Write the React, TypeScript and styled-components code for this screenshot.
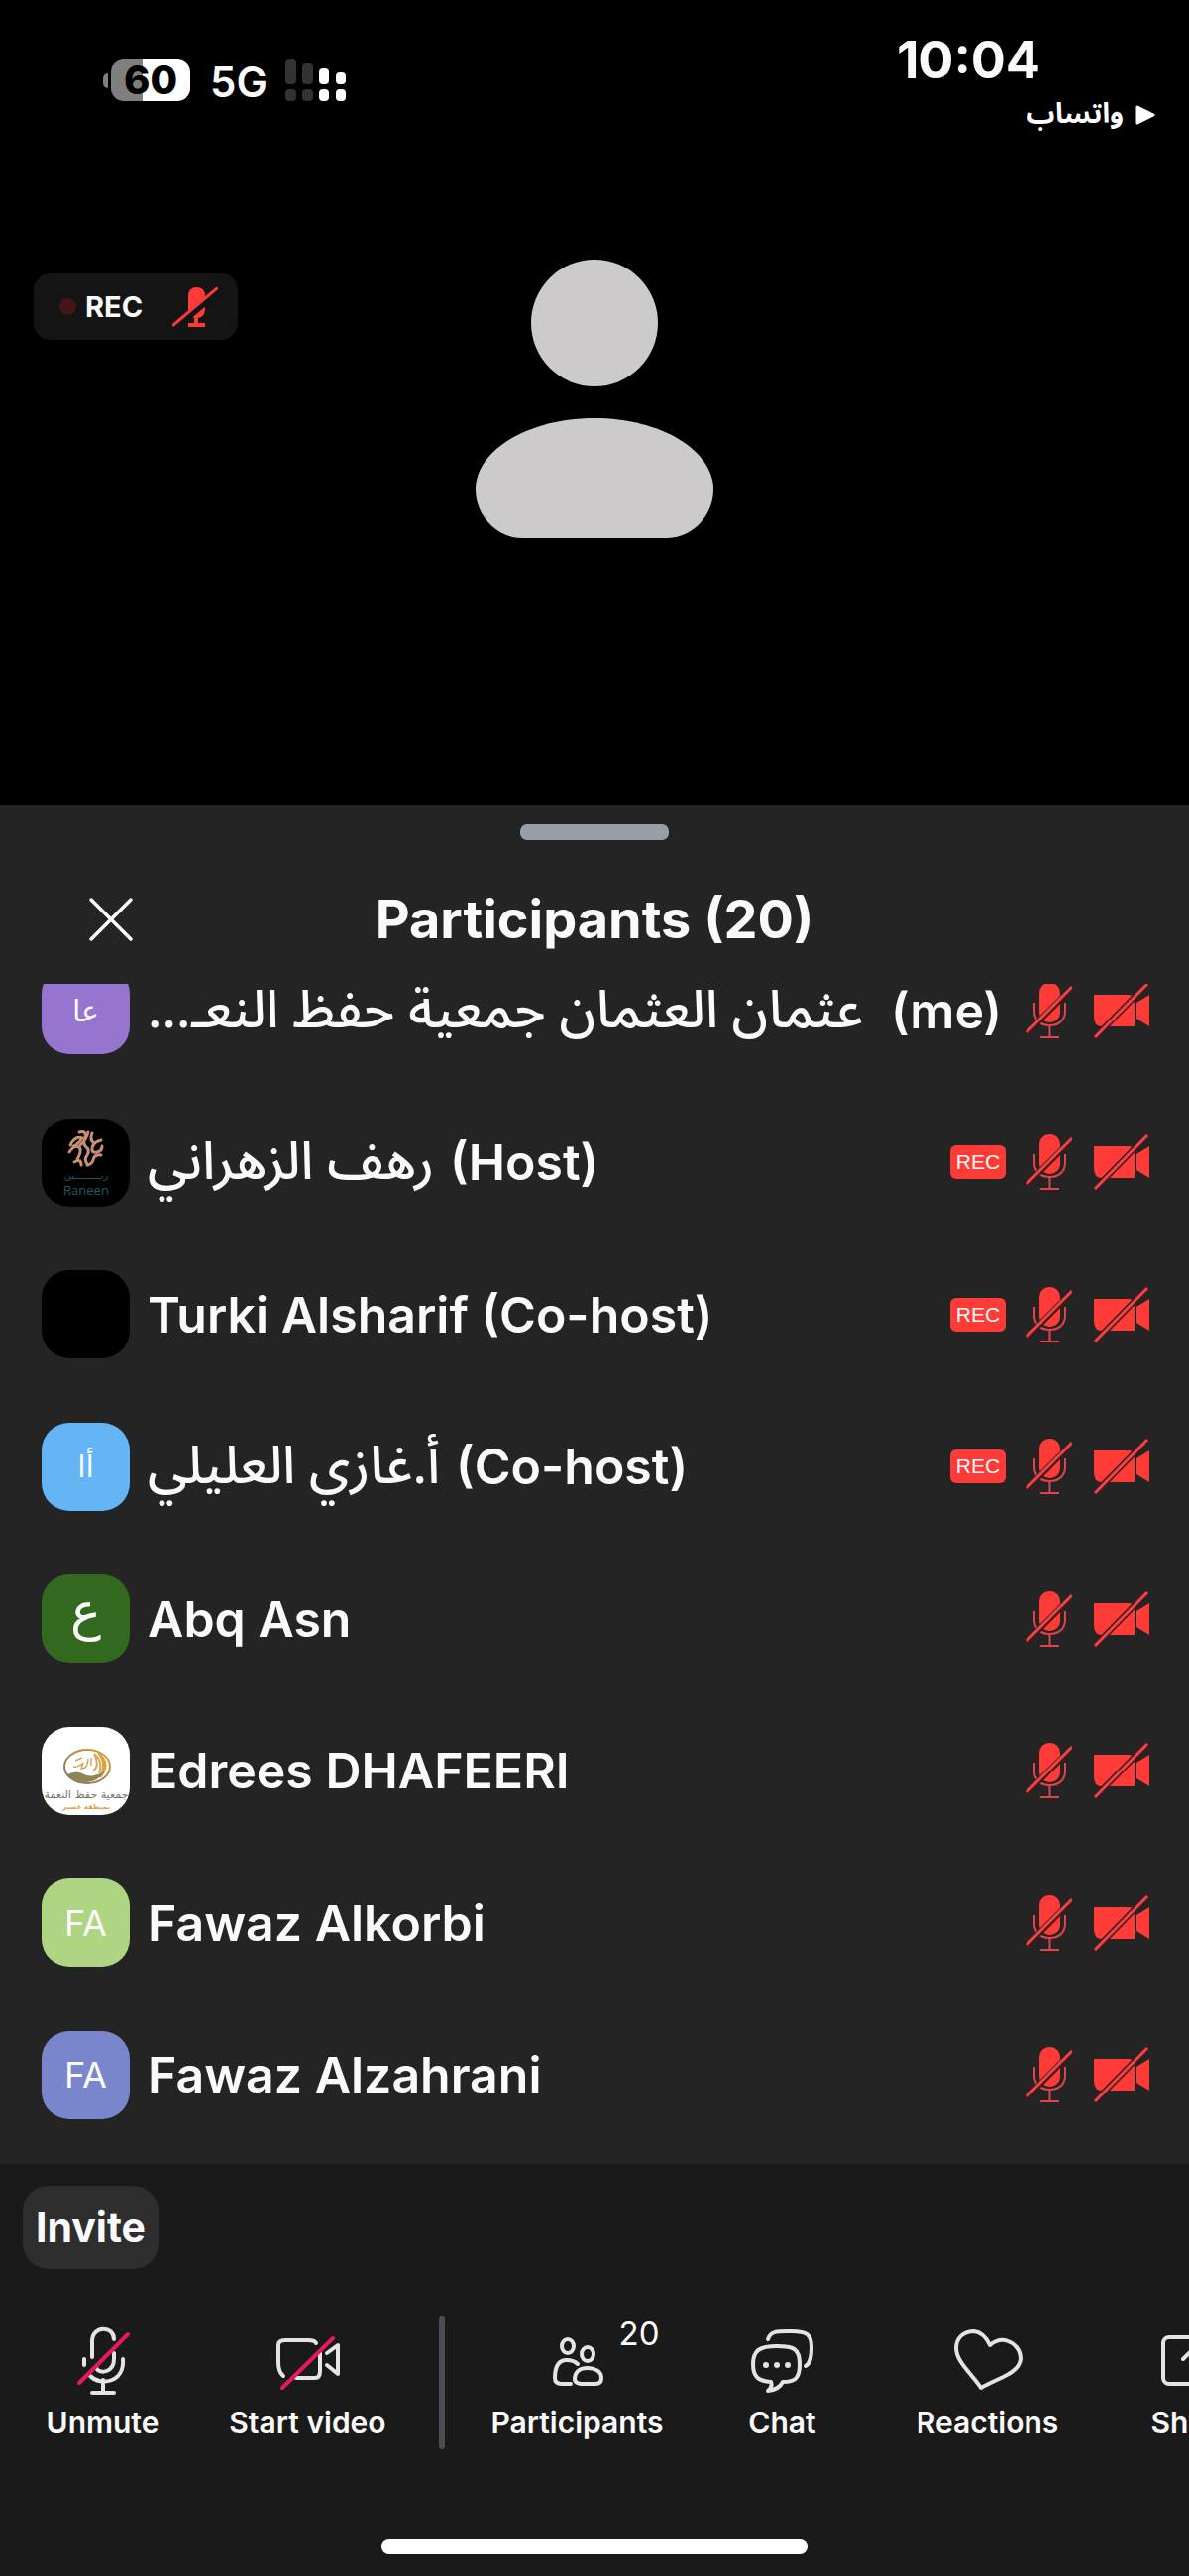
import React from "react";
import styled, { createGlobalStyle } from "styled-components";

const latin = `Inter, "DejaVu Sans", sans-serif`;
const arabic = `"Noto Sans Arabic", "DejaVu Sans", Inter, sans-serif`;
const alert = "#ff3b38";

const GlobalStyle = createGlobalStyle`
  * { box-sizing: border-box; }
  html, body, #root { height: 100%; }
  body {
    margin: 0;
    background: #1a1a1a;
    color: #fafafa;
    font-family: ${latin};
  }
  button {
    margin: 0;
    padding: 0;
    border: 0;
    background: none;
    color: inherit;
    font: inherit;
    cursor: pointer;
  }
  svg { display: block; flex: none; }
`;

const Screen = styled.div`
  display: flex;
  flex-direction: column;
  min-height: 100%;
  overflow: hidden;
`;

/* ---------- meeting stage ---------- */

const Stage = styled.section`
  background: #000;
  min-height: 812px;
  display: flex;
  flex-direction: column;
`;

const StatusBar = styled.header`
  display: flex;
  justify-content: space-between;
  height: 262px;
`;

const StatusGroup = styled.div`
  display: flex;
  align-items: center;
  height: 44px;
  margin: 59px 0 0 104px;
`;

const BatteryNub = styled.span`
  width: 5px;
  height: 15px;
  margin-right: 3px;
  border-radius: 5px 0 0 5px;
  background: #7f7f7f;
`;

const Battery = styled.span`
  display: grid;
  place-items: center;
  width: 80px;
  height: 42px;
  border-radius: 13px;
  background: linear-gradient(to right, #7f7f7f 40%, #fff 40%);
  color: #000;
  font-size: 40px;
  line-height: 42px;
  font-weight: 800;
`;

const Network = styled.span`
  margin: 0 18px 0 20px;
  padding-top: 4px;
  font-size: 42px;
  line-height: 44px;
  font-weight: 600;
`;

const ClockGroup = styled.div`
  display: flex;
  flex-direction: column;
  align-items: flex-end;
  margin: 36px 34px 0 0;
`;

const Clock = styled.time`
  padding-right: 116px;
  font-size: 52px;
  line-height: 50px;
  font-weight: 700;
`;

const BackLink = styled.a`
  display: flex;
  align-items: center;
  gap: 12px;
  margin-top: 8px;
  color: #fff;
  text-decoration: none;
  font-family: ${arabic};
  font-size: 28px;
  line-height: 44px;
  font-weight: 700;
`;

const Tile = styled.div`
  display: grid;
  grid-template-columns: 1fr auto 1fr;
  align-items: start;
`;

const RecordingPill = styled.div`
  justify-self: start;
  display: flex;
  align-items: center;
  width: 206px;
  height: 67px;
  margin: 14px 0 0 34px;
  padding: 0 20px 0 26px;
  border-radius: 17px;
  background: #141414;
  font-size: 29px;
  line-height: 34px;
  font-weight: 700;
`;

const RecordingDot = styled.span`
  width: 17px;
  height: 17px;
  margin-right: 9px;
  border-radius: 50%;
  background: #46151a;
`;

const PillMic = styled.span`
  margin-left: auto;
`;

/* ---------- participants sheet ---------- */

const Sheet = styled.section`
  flex: 1;
  display: flex;
  flex-direction: column;
  background: #242424;
`;

const Handle = styled.div`
  width: 150px;
  height: 16px;
  margin: 20px auto 0;
  border-radius: 7px;
  background: #97a0a9;
`;

const SheetHeader = styled.header`
  display: grid;
  grid-template-columns: 1fr auto 1fr;
  align-items: center;
  height: 145px;
  padding-top: 14px;
`;

const CloseButton = styled.button`
  justify-self: start;
  margin-left: 88px;
`;

const SheetTitle = styled.h1`
  margin: 0;
  font-size: 54px;
  line-height: 60px;
  font-weight: 700;
`;

const Scroller = styled.div`
  flex: 1;
  display: flex;
  flex-direction: column;
  overflow: hidden;
  padding-bottom: 13px;
`;

const List = styled.ul`
  flex: 1;
  display: flex;
  flex-direction: column;
  margin: -50px 0 0;
  padding: 0;
  list-style: none;
`;

const Row = styled.li`
  flex: 1 0 153px;
  display: flex;
  align-items: center;
  padding: 0 40px 0 42px;
`;

const Avatar = styled.span<{ $color: string; $size?: number; $raised?: boolean }>`
  flex: none;
  display: grid;
  place-items: center;
  width: 89px;
  height: 89px;
  margin-right: 18px;
  padding-bottom: ${(p) => (p.$raised ? 16 : 0)}px;
  border-radius: 28px;
  overflow: hidden;
  background: ${(p) => p.$color};
  font-family: ${latin};
  font-size: ${(p) => p.$size ?? 36}px;
  line-height: 60px;
`;

const Name = styled.span`
  flex: 1;
  min-width: 0;
  display: flex;
  align-items: center;
  gap: 16px;
  font-size: 50px;
  line-height: 52px;
  font-weight: 600;
  white-space: nowrap;
`;

const ArabicName = styled.bdi`
  font-family: ${arabic};
  font-size: 53px;
  line-height: 52px;
  font-weight: 500;
`;

const SelfTag = styled.span`
  margin-left: auto;
  padding-right: 24px;
`;

const RecBadge = styled.span`
  width: 56px;
  margin-right: 20px;
  border-radius: 6px;
  background: ${alert};
  font-family: "Liberation Sans", Arial, sans-serif;
  font-size: 21px;
  line-height: 34px;
  text-align: center;
`;

const Status = styled.span`
  display: flex;
  align-items: center;
  gap: 22px;
`;

/* ---------- dock ---------- */

const Dock = styled.footer`
  background: #1a1a1a;
  min-height: 416px;
  display: flex;
  flex-direction: column;
`;

const InviteButton = styled.button`
  align-self: flex-start;
  width: 137px;
  height: 84px;
  margin: 22px 0 0 23px;
  border-radius: 26px;
  background: #2e2e2e;
  font-size: 41px;
  font-weight: 700;
`;

const Toolbar = styled.nav`
  display: flex;
  align-items: center;
  margin-top: 48px;
  overflow: hidden;
`;

const Tool = styled.button`
  flex: none;
  display: flex;
  flex-direction: column;
  align-items: center;
  gap: 7px;
  width: 207px;
  padding-bottom: 7px;
  font-size: 30px;
  line-height: 34px;
  font-weight: 600;
`;

const ToolIcon = styled.span`
  position: relative;
  display: grid;
  place-items: center;
  width: 80px;
  height: 80px;
`;

const Count = styled.span`
  position: absolute;
  left: 82px;
  top: -6px;
  font-size: 33px;
  line-height: 40px;
  font-weight: 400;
`;

const Divider = styled.span`
  flex: none;
  width: 6px;
  height: 134px;
  margin: 0 30px 0 29px;
  border-radius: 3px;
  background: #4a4e54;
`;

const HomeIndicator = styled.div`
  width: 430px;
  height: 15px;
  margin: auto auto 22px;
  border-radius: 8px;
  background: #fff;
`;

/* ---------- drawings ---------- */

const SignalDots = () => (
  <svg width="62" height="42" viewBox="0 0 62 42" aria-hidden="true">
    <g fill="#333">
      <rect x="0" y="0" width="11" height="25" rx="4" />
      <rect x="17" y="4" width="11" height="21" rx="4" />
      <rect x="0" y="30" width="11" height="12" rx="4" />
      <rect x="17" y="30" width="11" height="12" rx="4" />
    </g>
    <g fill="#fff">
      <rect x="34" y="9" width="10" height="16" rx="4" />
      <rect x="51" y="13" width="10" height="12" rx="4" />
      <rect x="34" y="30" width="10" height="12" rx="4" />
      <rect x="51" y="30" width="10" height="12" rx="4" />
    </g>
  </svg>
);

const BackArrow = () => (
  <svg width="20" height="22" viewBox="0 0 20 22" aria-hidden="true">
    <path d="M2 3 L18 11 L2 19 Z" fill="#fff" stroke="#fff" strokeWidth="3" strokeLinejoin="round" />
  </svg>
);

const Person = () => (
  <svg width="240" height="281" viewBox="0 0 240 281" role="img" aria-label="Camera is off">
    <g fill="#cccacb">
      <circle cx="120" cy="64" r="64" />
      <path d="M0 232 C0 192 54 160 120 160 S240 192 240 232 C240 259 218 281 193 281 H47 C22 281 0 259 0 232 Z" />
    </g>
  </svg>
);

const PillMicIcon = () => (
  <svg width="46" height="40" viewBox="0 0 46 40" aria-hidden="true">
    <rect x="16" y="0" width="17" height="31" rx="8" fill={alert} />
    <path d="M24 30 V37 M16 38 H33" stroke={alert} strokeWidth="4" />
    <path d="M3 41 L47 4" stroke="#141414" strokeWidth="6" />
    <path d="M1 38 L45 1" stroke="#f4393b" strokeWidth="3" strokeLinecap="round" />
  </svg>
);

const MutedMic = () => (
  <svg width="47" height="58" viewBox="0 0 47 58" role="img" aria-label="Muted">
    <rect x="14" y="1" width="21" height="40" rx="10" fill={alert} />
    <path
      d="M9 21 V30 C9 39 16 44 24.500 44 S40 39 40 30 V21 M24.500 44 V56 M15 56 H34"
      fill="none"
      stroke="#e2444a"
      strokeWidth="2"
    />
    <path d="M1 52 L47 6" stroke="#4a1718" strokeWidth="6" />
    <path d="M1 51 L47 5" stroke="#e5474b" strokeWidth="3" />
  </svg>
);

const CameraOff = () => (
  <svg width="56" height="58" viewBox="0 0 56 58" role="img" aria-label="Camera off">
    <path d="M0 13 H35 Q41 13 41 19 V45 H8 Q0 45 0 35 Z" fill={alert} />
    <path d="M43 21 L56 13 V45 L43 37 Z" fill={alert} />
    <path d="M0 57 L55 1" stroke="#4a1718" strokeWidth="6" />
    <path d="M1 56 L54 2" stroke="#e5474b" strokeWidth="3" />
  </svg>
);

const CloseIcon = () => (
  <svg width="48" height="48" viewBox="0 0 48 48" aria-hidden="true">
    <path d="M4 4 L44 44 M44 4 L4 44" stroke="#fff" strokeWidth="3.500" strokeLinecap="round" />
  </svg>
);

const RaneenLogo = () => (
  <svg width="89" height="89" viewBox="0 0 89 89" role="img" aria-label="Raneen">
    <g fill="none" stroke="#c98f74" strokeWidth="3" strokeLinecap="round">
      <path d="M29 27 Q34 17 41 20 Q36 27 32 28 M28 34 Q33 26 38 29 Q41 33 36 41" />
      <path d="M39 27 Q45 22 47 14 M38 14 Q46 12 44 20 Q41 25 45 29 Q49 32 46 37 Q42 42 47 47" />
      <path d="M51 15 Q48 22 53 25 M60 22 Q52 24 51 30 Q50 35 56 34 Q61 33 61 28" />
      <path d="M60 37 Q53 36 52 42 Q51 46 46 47 M33 44 Q40 40 40 47" />
    </g>
    <text x="45" y="61" textAnchor="middle" fontFamily="DejaVu Sans, sans-serif" fontSize="10" fill="#1d5a62">
      رنـــــــــين
    </text>
    <text x="45" y="77" textAnchor="middle" fontFamily="Open Sans, sans-serif" fontSize="13" fill="#1d5a62">
      Raneen
    </text>
  </svg>
);

const SocietyLogo = () => (
  <svg width="89" height="89" viewBox="0 0 89 89" role="img" aria-label="جمعية حفظ النعمة">
    <defs>
      <linearGradient id="ring" x1="0" y1="1" x2="1" y2="0">
        <stop offset="0" stopColor="#777466" />
        <stop offset="0.500" stopColor="#a88a4e" />
        <stop offset="1" stopColor="#e0a23c" />
      </linearGradient>
    </defs>
    <ellipse cx="46" cy="40" rx="23" ry="17" fill="none" stroke="url(#ring)" strokeWidth="2" />
    <path d="M57 26 Q71 37 59 51 Q66 36 57 26 Z" fill="#e0a23c" stroke="#e0a23c" strokeWidth="2" />
    <path d="M26 48 Q36 43 43 48 Q50 52 64 45 Q55 57 44 56 Q32 56 26 48 Z" fill="#8f8457" />
    <path d="M52 44 Q59 40 53 27 Q62 34 58 47" fill="none" stroke="#d8ab62" strokeWidth="2" />
    <path d="M34 34 L41 31 M32 40 Q37 41 42 36 L40 42 Q46 43 47 32 M50 31 V39" fill="none" stroke="#d3a858" strokeWidth="1.500" />
    <text x="45" y="72" textAnchor="middle" fontFamily="DejaVu Sans, sans-serif" fontSize="11" fill="#77746f">
      جمعية حفظ النعمة
    </text>
    <text x="45" y="83" textAnchor="middle" fontFamily="DejaVu Sans, sans-serif" fontSize="7" fontWeight="700" fill="#d8a24a">
      بمنطقة عسير
    </text>
  </svg>
);

const Line = styled.svg`
  fill: none;
  stroke: #e3e3e8;
  stroke-width: 4;
  stroke-linecap: round;
  stroke-linejoin: round;
`;

const UnmuteIcon = () => (
  <Line width="80" height="80" viewBox="0 0 80 80" aria-hidden="true">
    <path d="M29 38 V22 C29 6 51 6 51 20 M51 34 V40 C51 53 37 56 33 49" />
    <path d="M21 40 V46 M60 40 C62 63 38 68 27 57 M40 61 V74 M29 74 H51" />
    <path d="M16 64 L65 15" stroke="#e5195c" />
  </Line>
);

const StartVideoIcon = () => (
  <Line width="80" height="80" viewBox="0 0 80 80" aria-hidden="true">
    <path d="M15 57 Q10 53 10 43 V26 Q10 21 17 21 H40 Q47 21 48 24 M52 34 V52 Q52 59 47 59 H28" />
    <path d="M59 34 L70 26 V55 L59 46" />
    <path d="M14 69 L65 19" stroke="#e5195c" />
  </Line>
);

const ParticipantsIcon = () => (
  <Line width="80" height="80" viewBox="0 0 80 80" aria-hidden="true">
    <ellipse cx="30" cy="27" rx="6" ry="7" />
    <ellipse cx="50" cy="35" rx="6" ry="7" />
    <path d="M33 65 H24 Q17 65 17 59 C17 47 21 41 29 41 Q36 41 40 45" />
    <path d="M43 65 Q37 64 37 60 C37 52 43 49 50 49 S64 52 64 59 Q64 65 58 65 Z" />
  </Line>
);

const ChatIcon = () => (
  <Line width="80" height="80" viewBox="0 0 80 80" aria-hidden="true">
    <path d="M25 20 C28 11 36 12 49 12 C64 12 69 15 69 28 C69 38 68 44 63 47" />
    <path d="M34 27 C50 27 57 29 57 45 C57 60 52 63 40 63 Q36 71 25 72 Q30 68 28 63 C15 62 10 58 10 45 C10 31 17 27 34 27 Z" />
    <g fill="#e3e3e8" stroke="none">
      <circle cx="23" cy="46" r="3" />
      <circle cx="34" cy="46" r="3" />
      <circle cx="45" cy="46" r="3" />
    </g>
  </Line>
);

const HeartIcon = () => (
  <Line width="80" height="80" viewBox="0 0 80 80" aria-hidden="true">
    <path d="M33 69 C24 55 8 43 8 29 C8 18 16 12 26 12 Q36 13 42 26 Q49 20 57 21 C67 23 73 31 73 40 C71 55 50 59 33 69 Z" />
  </Line>
);

const ShareIcon = () => (
  <Line width="80" height="80" viewBox="0 0 80 80" aria-hidden="true">
    <rect x="10" y="18" width="60" height="47" rx="6" />
    <path d="M40 53 V30 M30 40 L40 30 L50 40" />
  </Line>
);

/* ---------- data ---------- */

type Participant = {
  id: string;
  name: React.ReactNode;
  avatar: React.ReactNode;
  color: string;
  size?: number;
  raised?: boolean;
  recording?: boolean;
};

const participants: Participant[] = [
  {
    id: "me",
    name: (
      <>
        <ArabicName dir="rtl">عثمان العثمان جمعية حفظ النعـ...</ArabicName>
        <SelfTag>(me)</SelfTag>
      </>
    ),
    avatar: "عا",
    color: "#9575cd",
    size: 30,
  },
  {
    id: "rahaf",
    name: (
      <>
        <ArabicName dir="rtl">رهف الزهراني</ArabicName>
        <span>(Host)</span>
      </>
    ),
    avatar: <RaneenLogo />,
    color: "#000",
    recording: true,
  },
  { id: "turki", name: "Turki Alsharif (Co-host)", avatar: null, color: "#000", recording: true },
  {
    id: "ghazi",
    name: (
      <>
        <ArabicName dir="rtl">أ.غازي العليلي</ArabicName>
        <span>(Co-host)</span>
      </>
    ),
    avatar: "أا",
    color: "#64b5f6",
    size: 30,
    recording: true,
  },
  { id: "abq", name: "Abq Asn", avatar: "ع", color: "#33691e", size: 52, raised: true },
  { id: "edrees", name: "Edrees DHAFEERI", avatar: <SocietyLogo />, color: "#fff" },
  { id: "alkorbi", name: "Fawaz Alkorbi", avatar: "FA", color: "#aed581" },
  { id: "alzahrani", name: "Fawaz Alzahrani", avatar: "FA", color: "#7986cb" },
];

const App = () => (
  <>
    <GlobalStyle />
    <Screen>
      <Stage>
        <StatusBar>
          <StatusGroup>
            <BatteryNub />
            <Battery>60</Battery>
            <Network>5G</Network>
            <SignalDots />
          </StatusGroup>
          <ClockGroup>
            <Clock>10:04</Clock>
            <BackLink href="#whatsapp">
              <bdi>واتساب</bdi>
              <BackArrow />
            </BackLink>
          </ClockGroup>
        </StatusBar>
        <Tile>
          <RecordingPill>
            <RecordingDot />
            REC
            <PillMic>
              <PillMicIcon />
            </PillMic>
          </RecordingPill>
          <Person />
        </Tile>
      </Stage>

      <Sheet>
        <Handle />
        <SheetHeader>
          <CloseButton type="button" aria-label="Close">
            <CloseIcon />
          </CloseButton>
          <SheetTitle>Participants (20)</SheetTitle>
        </SheetHeader>
        <Scroller>
          <List>
            {participants.map((p) => (
              <Row key={p.id}>
                <Avatar $color={p.color} $size={p.size} $raised={p.raised}>
                  {p.avatar}
                </Avatar>
                <Name>{p.name}</Name>
                {p.recording && <RecBadge>REC</RecBadge>}
                <Status>
                  <MutedMic />
                  <CameraOff />
                </Status>
              </Row>
            ))}
          </List>
        </Scroller>
      </Sheet>

      <Dock>
        <InviteButton type="button">Invite</InviteButton>
        <Toolbar>
          <Tool type="button">
            <ToolIcon>
              <UnmuteIcon />
            </ToolIcon>
            Unmute
          </Tool>
          <Tool type="button">
            <ToolIcon>
              <StartVideoIcon />
            </ToolIcon>
            Start video
          </Tool>
          <Divider />
          <Tool type="button">
            <ToolIcon>
              <ParticipantsIcon />
              <Count>20</Count>
            </ToolIcon>
            Participants
          </Tool>
          <Tool type="button">
            <ToolIcon>
              <ChatIcon />
            </ToolIcon>
            Chat
          </Tool>
          <Tool type="button">
            <ToolIcon>
              <HeartIcon />
            </ToolIcon>
            Reactions
          </Tool>
          <Tool type="button">
            <ToolIcon>
              <ShareIcon />
            </ToolIcon>
            Share
          </Tool>
        </Toolbar>
        <HomeIndicator />
      </Dock>
    </Screen>
  </>
);

export default App;
